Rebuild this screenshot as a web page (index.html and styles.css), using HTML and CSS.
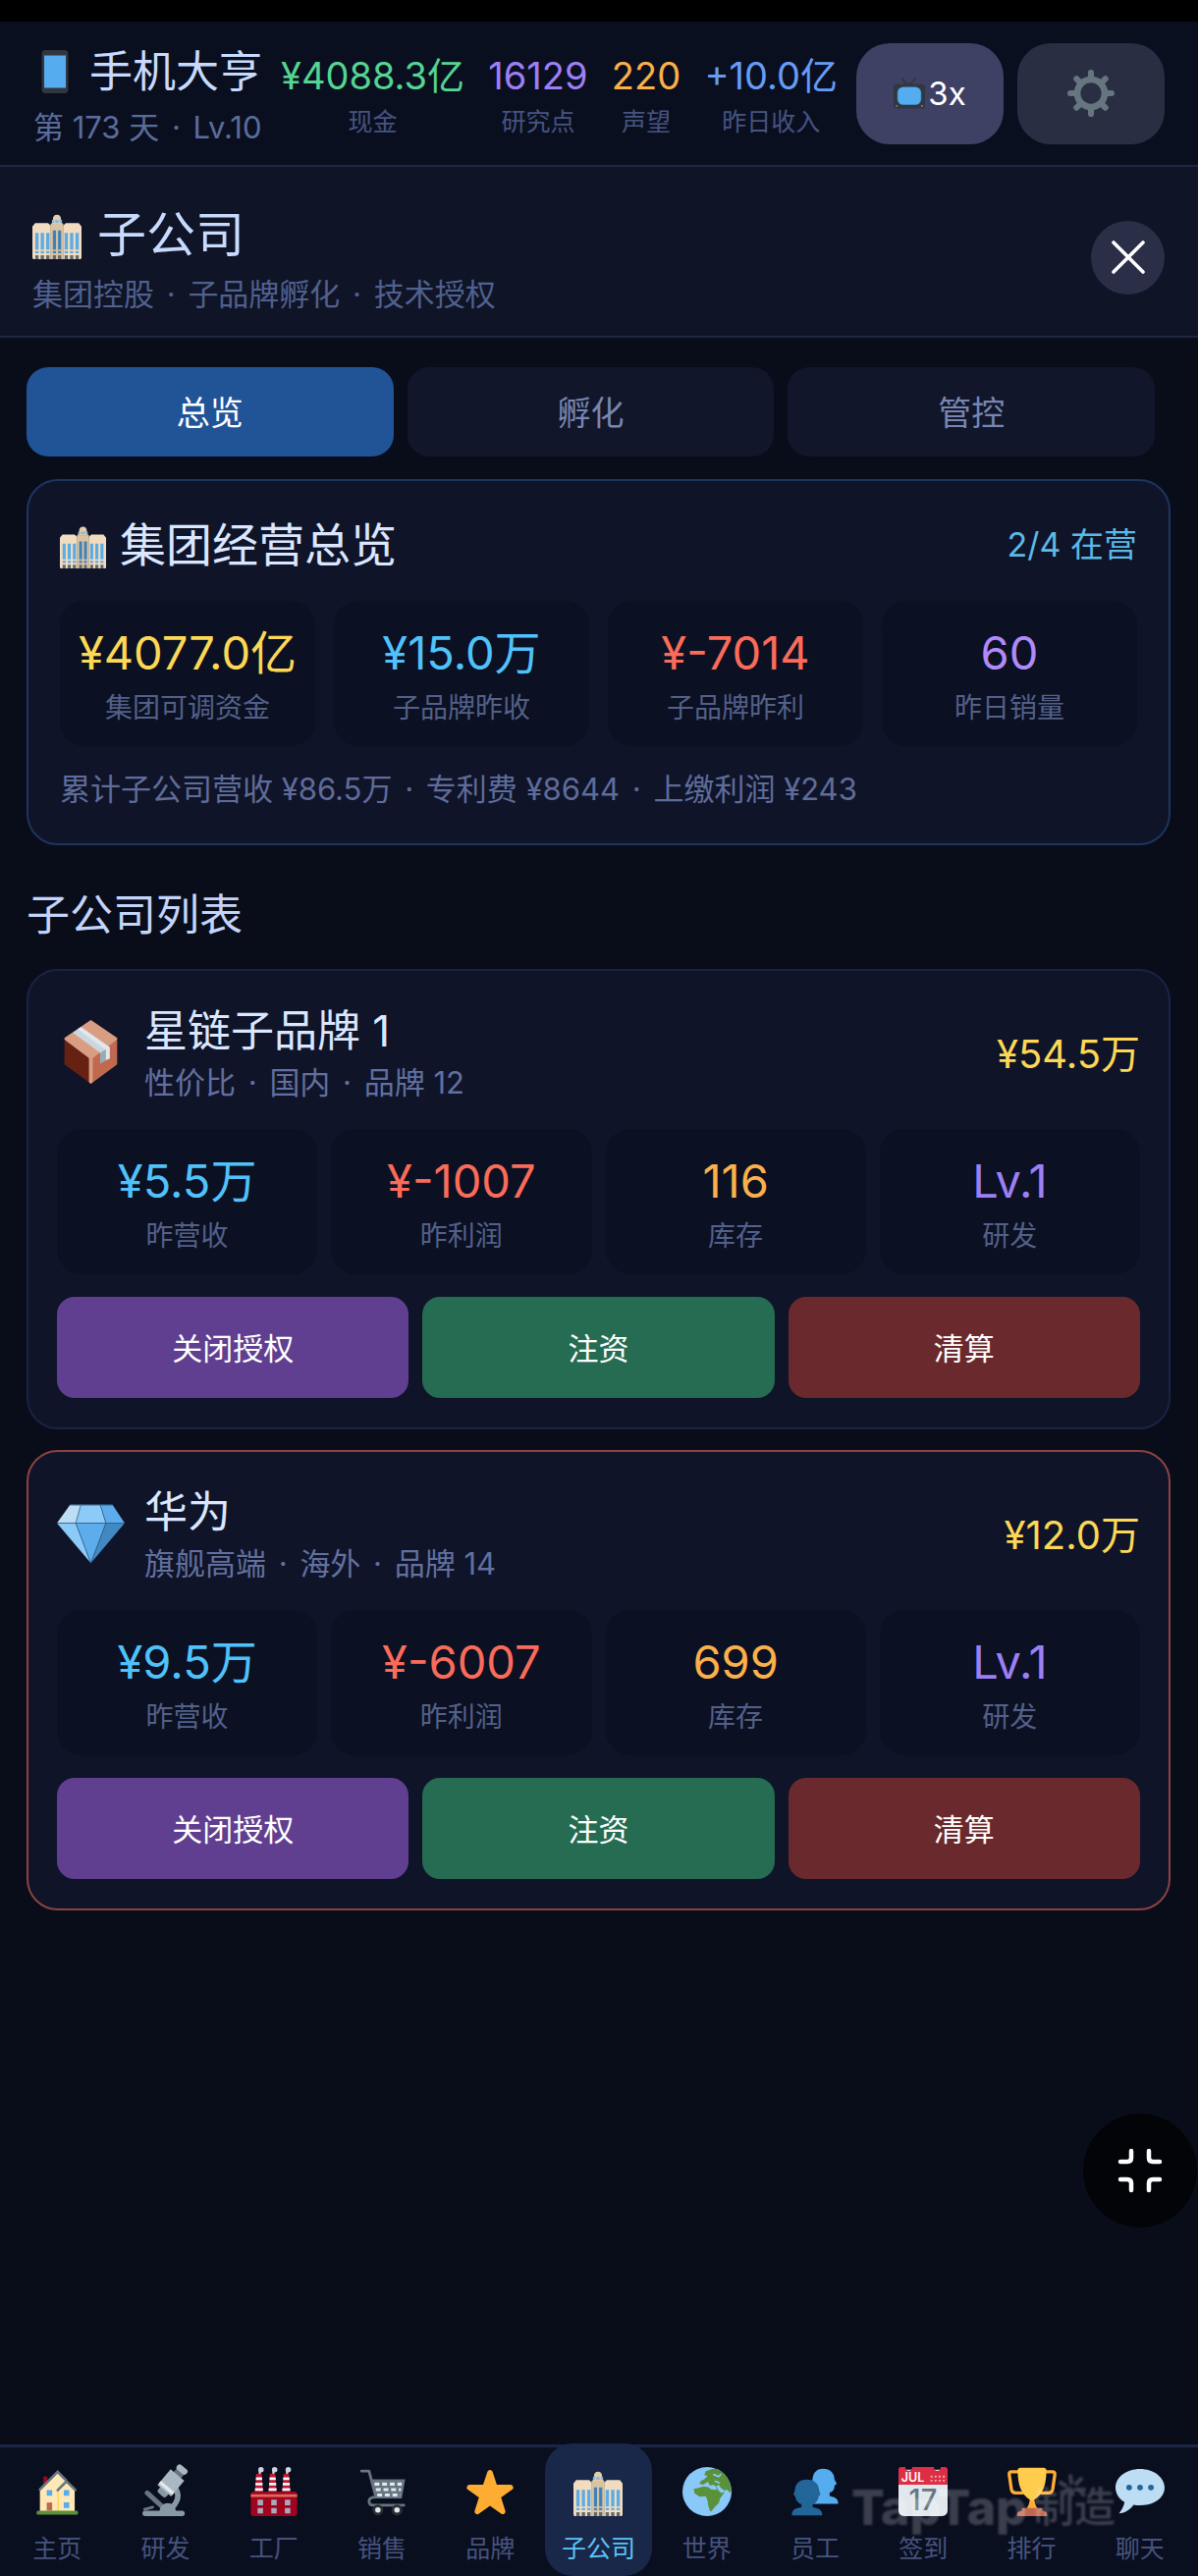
FILE: index.html
```html
<!DOCTYPE html>
<html lang="zh-CN">
<head>
	<meta charset="utf-8">
	<meta name="viewport" content="width=device-width, initial-scale=1">
	<title>手机大亨</title>
	<link rel="stylesheet" href="styles.css">
</head>
<body>
	<!-- shared icon, used in three places -->
	<svg class="defs" aria-hidden="true">
		<symbol id="building" viewBox="0 0 36 36">
			<path fill="#f1dcc1" d="M0 12l2-2.500h9.500l2 2V36H1a1 1 0 0 1-1-1zM36 12l-2-2.500h-9.500l-2 2V36H35a1 1 0 0 0 1-1z"/>
			<path fill="#d9c3a3" d="M13.300 10h9.400v26h-9.400z"/>
			<path fill="#e3cda9" d="M15 7q0-3.500 3-3.500T21 7l1 3h-8z"/>
			<path fill="#88b9dc" d="M14.300 7.200h7.400v2.100h-7.400z"/>
			<path fill="#e3cda9" d="M16 7h.7v3H16zM19.300 7h.7v3h-.7z"/>
			<path fill="#5dabe3" d="M2.100 16.700h2.400V29H2.100zM6.100 16.700h2.400V29H6.100zM10.100 16.700h2.400V29h-2.400zM23.600 16.700H26V29h-2.400zM27.600 16.700H30V29h-2.400zM31.600 16.700H34V29h-2.400zM2.100 30h2.400v1.700H2.100zM6.100 30h2.400v1.700H6.100zM10.100 30h2.400v1.700h-2.400zM23.600 30H26v1.700h-2.400zM27.600 30H30v1.700h-2.400zM31.600 30H34v1.700h-2.400z"/>
			<path fill="#3f82b9" d="M15 15h2.300v14H15zM18.800 15h2.300v14h-2.300zM15 30h2.300v1.700H15zM18.800 30h2.300v1.700h-2.300z"/>
			<path fill="#66686b" d="M2.100 33.200h2.400V36H2.100zM6.100 33.200h2.400V36H6.100zM10.100 33.200h2.400V36h-2.400zM15 33.200h2.300V36H15zM18.800 33.200h2.300V36h-2.300zM23.600 33.200H26V36h-2.400zM27.600 33.200H30V36h-2.400zM31.600 33.200H34V36h-2.400z"/>
		</symbol>
	</svg>

	<div class="statusbar"></div>

	<header class="topbar">
		<div class="brand">
			<h1 class="brand-name">
				<svg class="icon-phone" viewBox="0 0 36 36"><rect x="7" width="22" height="36" rx="3" fill="#31373d"/><path fill="#55acee" d="M9 4.500h18v27H9z"/></svg>
				手机大亨
			</h1>
			<div class="brand-sub">第 173 天 <span class="dot">·</span> Lv.10</div>
		</div>
		<div class="resources">
			<div class="resource"><div class="resource-value green">¥4088.3亿</div><div class="resource-label">现金</div></div>
			<div class="resource"><div class="resource-value purple">16129</div><div class="resource-label">研究点</div></div>
			<div class="resource"><div class="resource-value orange">220</div><div class="resource-label">声望</div></div>
			<div class="resource"><div class="resource-value blue">+10.0亿</div><div class="resource-label">昨日收入</div></div>
		</div>
		<div class="tools">
			<button class="tool speed" type="button">
				<svg class="icon-tv" viewBox="0 0 36 36">
					<path d="M10 1l7 8 8-8" fill="none" stroke="#31373d" stroke-width="2.200" stroke-linecap="round"/>
					<rect y="7" width="36" height="28" rx="4" fill="#31373d"/>
					<rect x="4" y="10" width="28" height="21" rx="7" fill="#2b6a9c"/>
					<rect x="4.800" y="10.500" width="26.400" height="20" rx="6" fill="#55acee"/>
					<circle cx="3.500" cy="32" r="1.300" fill="#66757f"/><circle cx="32.500" cy="32" r="1.300" fill="#66757f"/>
				</svg>3x
			</button>
			<button class="tool" type="button" aria-label="设置">
				<svg class="icon-gear" viewBox="0 0 36 36">
					<circle cx="18" cy="18" r="10.500" fill="none" stroke="#66757f" stroke-width="5"/>
					<path d="M18 6V2.300M18 30v3.700M6 18H2.300M30 18h3.700M9.500 9.500L7 7M26.500 9.500L29 7M9.500 26.500L7 29M26.500 26.500L29 29" stroke="#66757f" stroke-width="4.600" stroke-linecap="round"/>
				</svg>
			</button>
		</div>
	</header>

	<section class="pagehead">
		<div>
			<h2 class="pagehead-title"><svg class="icon-title"><use href="#building"/></svg>子公司</h2>
			<p class="pagehead-sub">集团控股 <span class="dot">·</span> 子品牌孵化 <span class="dot">·</span> 技术授权</p>
		</div>
		<button class="close" type="button" aria-label="关闭">
			<svg viewBox="0 0 36 36"><path d="M3 3l30 30M33 3L3 33" stroke="#fff" stroke-width="3.600" stroke-linecap="round"/></svg>
		</button>
	</section>

	<main class="content">
		<div class="tabs">
			<button class="tab active" type="button">总览</button>
			<button class="tab" type="button">孵化</button>
			<button class="tab" type="button">管控</button>
		</div>

		<section class="card overview">
			<div class="overview-head">
				<h3 class="overview-title"><svg class="icon-overview"><use href="#building"/></svg>集团经营总览</h3>
				<span class="overview-count">2/4 在营</span>
			</div>
			<div class="stats">
				<div class="stat"><div class="stat-value gold">¥4077.0亿</div><div class="stat-label">集团可调资金</div></div>
				<div class="stat"><div class="stat-value sky">¥15.0万</div><div class="stat-label">子品牌昨收</div></div>
				<div class="stat"><div class="stat-value red">¥-7014</div><div class="stat-label">子品牌昨利</div></div>
				<div class="stat"><div class="stat-value violet">60</div><div class="stat-label">昨日销量</div></div>
			</div>
			<p class="overview-note">累计子公司营收 ¥86.5万 <span class="dot">·</span> 专利费 ¥8644 <span class="dot">·</span> 上缴利润 ¥243</p>
		</section>

		<h3 class="section-title">子公司列表</h3>

		<div class="list">
			<article class="card company">
				<div class="company-head">
					<svg class="company-icon" viewBox="0 0 36 36">
						<path fill="#662113" d="M4 11.500v13.200L18 35V21z"/>
						<path fill="#c1694f" d="M32 11.500v13.200L18 35V21z"/>
						<path fill="#d99e82" d="M18 1l14 9.500v1L18 22 4 11.500v-1z"/>
						<path fill="#d99e82" d="M17 20.500h2V34l-1 1-1-1z"/>
						<path fill="#ccd6dd" d="M8.500 7.800L12.800 4.800 28 15.500v6L23 23.500v-5z"/>
						<path fill="#e1e8ed" d="M11 5.900l1.800-1.100L28 15.500v6l-2 .8v-5.400z"/>
						<path fill="#99aab5" d="M23 18.500l3-2v6l-3 1.700z"/>
					</svg>
					<div class="company-info">
						<h4 class="company-name">星链子品牌 1</h4>
						<p class="company-sub">性价比 <span class="dot">·</span> 国内 <span class="dot">·</span> 品牌 12</p>
					</div>
					<span class="company-cash">¥54.5万</span>
				</div>
				<div class="stats">
					<div class="stat"><div class="stat-value sky">¥5.5万</div><div class="stat-label">昨营收</div></div>
					<div class="stat"><div class="stat-value red">¥-1007</div><div class="stat-label">昨利润</div></div>
					<div class="stat"><div class="stat-value orange">116</div><div class="stat-label">库存</div></div>
					<div class="stat"><div class="stat-value purple">Lv.1</div><div class="stat-label">研发</div></div>
				</div>
				<div class="actions">
					<button class="action license" type="button">关闭授权</button>
					<button class="action invest" type="button">注资</button>
					<button class="action liquidate" type="button">清算</button>
				</div>
			</article>

			<article class="card company warning">
				<div class="company-head">
					<svg class="company-icon" viewBox="0 0 36 36">
						<path fill="#bdddf4" d="M7 3h6l-2.500 9.800H0z"/>
						<path fill="#8ccaf7" d="M12.700 3H23l3 9.800H10z"/>
						<path fill="#5dadec" d="M23 3h6.500L36 12.800H26z"/>
						<path fill="#8ccaf7" d="M0 12.800h10L18 34z"/>
						<path fill="#5dadec" d="M10 12.800h16L18 34z"/>
						<path fill="#4289c1" d="M26 12.800h10L18 34z"/>
						<path fill="none" stroke="#2a5c88" stroke-width=".4" d="M7 3.200h22.500M0 12.800h36M12.700 3L10 12.800 18 34l8-21.200L23 3"/>
					</svg>
					<div class="company-info">
						<h4 class="company-name">华为</h4>
						<p class="company-sub">旗舰高端 <span class="dot">·</span> 海外 <span class="dot">·</span> 品牌 14</p>
					</div>
					<span class="company-cash">¥12.0万</span>
				</div>
				<div class="stats">
					<div class="stat"><div class="stat-value sky">¥9.5万</div><div class="stat-label">昨营收</div></div>
					<div class="stat"><div class="stat-value red">¥-6007</div><div class="stat-label">昨利润</div></div>
					<div class="stat"><div class="stat-value orange">699</div><div class="stat-label">库存</div></div>
					<div class="stat"><div class="stat-value purple">Lv.1</div><div class="stat-label">研发</div></div>
				</div>
				<div class="actions">
					<button class="action license" type="button">关闭授权</button>
					<button class="action invest" type="button">注资</button>
					<button class="action liquidate" type="button">清算</button>
				</div>
			</article>
		</div>
	</main>

	<nav class="bottomnav">
		<a class="navitem" href="#">
			<svg viewBox="0 0 36 36">
				<path fill="#a0041e" d="M8 7h3v7H8z"/>
				<path fill="#ffe8b6" d="M5.500 16L18.500 4 31 16v17H5.500z"/>
				<path fill="#ffcc4d" d="M18.500 17h.8v15h-.8z"/>
				<path d="M5.500 16.500l13-13 6 6M18.500 17l6.500-6.500 6.500 6.300" fill="none" stroke="#66757f" stroke-width="1.900" stroke-linecap="round"/>
				<path fill="#55acee" d="M10.500 17h4v4h-4zM23 17h4v4h-4zM23 26h4v4h-4z"/>
				<path fill="#c1694f" d="M10.500 26h4v6h-4z"/>
				<rect x="3" y="32" width="30.500" height="3" rx="1.200" fill="#5c913b"/>
			</svg>
			<span>主页</span>
		</a>
		<a class="navitem" href="#">
			<svg viewBox="0 0 36 36">
				<path d="M5 19l12 11" stroke="#66757f" stroke-width="3.600" stroke-linecap="round"/>
				<path d="M26 16q4 7-3 14" fill="none" stroke="#8899a6" stroke-width="4"/>
				<path fill="#8899a6" d="M14 32q1-5.500 6-5.500t6 5.500h4.500a1.700 1.700 0 0 1 0 4h-27a1.700 1.700 0 0 1 0-4z"/>
				<path d="M3 31l6-1.500" stroke="#66757f" stroke-width="2" stroke-linecap="round"/>
				<g transform="rotate(40 22 12)">
					<rect x="18.500" y="-1" width="7" height="6" fill="#66757f"/>
					<rect x="17.500" y="-3.500" width="9" height="4.500" rx="2" fill="#aab8c2"/>
					<rect x="18" y="15" width="8" height="8" rx="2" fill="#8899a6"/>
					<path fill="#aab8c2" d="M15.500 4h13v15h-13z"/>
					<path fill="#e1e8ed" d="M15.500 15h13v2.600h-13z"/>
				</g>
			</svg>
			<span>研发</span>
		</a>
		<a class="navitem" href="#">
			<svg viewBox="0 0 36 36">
				<path fill="#ccd6dd" d="M6.500 2q0-2 2-2t2 2-2 2l-.5 2h-1zM16.500 2q0-2 2-2t2 2-2 2l-.5 2h-1zM26.500 2q0-2 2-2t2 2-2 2l-.5 2h-1z"/>
				<path fill="#be1931" d="M5 5h4l1 14H4zM15 5h4l1 14h-6zM25 5h4l1 14h-6z"/>
				<path fill="#f5f8fa" d="M4.800 7.500h4.500v2H4.700zM4.500 11.500h5.100v2H4.400zM4.200 15.500h5.700v2H4zM14.800 7.500h4.500v2h-4.600zM14.500 11.500h5.100v2h-5.200zM14.200 15.500h5.700v2H14zM24.800 7.500h4.500v2h-4.600zM24.500 11.500h5.100v2h-5.200zM24.200 15.500h5.700v2H24z"/>
				<rect x="1" y="18" width="34" height="18" rx="2" fill="#a0041e"/>
				<rect x="1" y="20" width="34" height="2" fill="#dd6b5b"/>
				<path fill="#a7a9bd" d="M6 24h4v4H6zM16 24h4v4h-4zM26 24h4v4h-4zM6 30h4v4H6zM16 30h4v4h-4zM26 30h4v4h-4z"/>
			</svg>
			<span>工厂</span>
		</a>
		<a class="navitem" href="#">
			<svg viewBox="0 0 36 36">
				<path d="M3 3h5.500l5 19q-5 0-5 3t3 3H34" fill="none" stroke="#66757f" stroke-width="2" stroke-linecap="round" stroke-linejoin="round"/>
				<path fill="#66757f" d="M10 9h25l-2.500 14H13.500z"/>
				<path d="M12.500 12.500h20M13.500 16.500h18.500M14.500 20.500h17" stroke="#e1e8ed" stroke-width="2.200" stroke-dasharray="3.600 2"/>
				<circle cx="15" cy="31.500" r="4" fill="#292f33"/><circle cx="15" cy="31.500" r="2" fill="#e1e8ed"/>
				<circle cx="29" cy="31.500" r="4" fill="#292f33"/><circle cx="29" cy="31.500" r="2" fill="#e1e8ed"/>
			</svg>
			<span>销售</span>
		</a>
		<a class="navitem" href="#">
			<svg viewBox="0 0 36 36"><path fill="#ffac33" d="M27.287 34.627c-.404 0-.806-.124-1.152-.371L18 28.422l-8.135 5.834a1.970 1.970 0 0 1-2.312-.008 1.971 1.971 0 0 1-.721-2.194l3.034-9.792-8.062-5.681a1.980 1.980 0 0 1-.708-2.203 1.978 1.978 0 0 1 1.866-1.363L12.947 13l3.179-9.549a1.976 1.976 0 0 1 3.749 0L23 13l10.036.015a1.975 1.975 0 0 1 1.159 3.566l-8.062 5.681 3.034 9.792a1.970 1.970 0 0 1-.720 2.194 1.957 1.957 0 0 1-1.160.379z"/></svg>
			<span>品牌</span>
		</a>
		<a class="navitem active" href="#" aria-current="page">
			<svg><use href="#building"/></svg>
			<span>子公司</span>
		</a>
		<a class="navitem" href="#">
			<svg viewBox="0 0 36 36">
				<circle cx="18" cy="18" r="18" fill="#88c9f9"/>
				<path fill="#5c913b" d="M16 6l1-3 5-1.500 4-.1Q34 5.500 35.800 16l-.6 3-2.500-2.500-2 .8-2.500-2-1.700-2.300-1.500.8 1 3 2.500 2.200 2.500-.8-3.500 5-.8 3-3 3.200-2 2.500q-1 1.500-1.800-.3l-1-3.500-.6-3.800-1.200-2.800-4.500.2-3.800-2.400-.5-3.300L11 15.500l4.500-1.300 3.500.6 2 1.600 4 .4-.3-2.600-2.200-1.200-2.200.6-1.800-2.800-3.200 2.200-2.800-.6.8-2.200 2.700-1.200L18.500 6.500z"/>
				<path d="M23 5.500l3.500 1.500 1.500-1.500M24 10.500l3 1" fill="none" stroke="#88c9f9" stroke-width="1.200" stroke-linecap="round"/>
			</svg>
			<span>世界</span>
		</a>
		<a class="navitem" href="#">
			<svg viewBox="0 0 36 36">
				<path fill="#55acee" d="M24 1.200c5 0 8.300 3.300 8.300 8l1.700 3.300q-1.200.6-1.600 1-.3 4.500-3.700 5.300v2.500c3.800.8 6.300 1.800 6.300 5.700H14l2-16q0-9.800 8-9.800z"/>
				<path fill="#226699" d="M12 9.200c5.500 0 9 3.500 9 8l1 2.800-1.200 1.400q-.8 4.500-4.500 6v2.200c4.600.8 7 1.900 7 5.900H1c0-4 2-5.300 7-6v-2.100q-3.800-1.500-4.600-6L2.200 20 3.300 17c0-4.500 3.200-7.800 8.700-7.800z"/>
			</svg>
			<span>员工</span>
		</a>
		<a class="navitem" href="#">
			<svg viewBox="0 0 36 36">
				<rect y="2" width="36" height="34" rx="4" fill="#e1e8ed"/>
				<path fill="#dd2e44" d="M0 13V2q0-2 2-2h3q0 2.800 2.500 2.800T10 0h16q0 2.800 2.500 2.800T31 0h3q2 0 2 2v11z"/>
				<path d="M23.500 7h11M23.500 10h11" stroke="#f4abba" stroke-width="1.400" stroke-dasharray="1.400 1.600"/>
				<text x="2" y="11" class="cal-month">JUL</text>
				<text x="18" y="32" class="cal-day" text-anchor="middle">17</text>
			</svg>
			<span>签到</span>
		</a>
		<a class="navitem" href="#">
			<svg viewBox="0 0 36 36">
				<path d="M9 3.500H3q-2 0-1.700 2l1.500 10.500q.5 3 3.200 3h6M27 3.500h6q2 0 1.700 2L33.200 16q-.5 3-3.200 3h-6" fill="none" stroke="#ffac33" stroke-width="2.400"/>
				<path fill="#ffac33" d="M16.500 22h3q0 6 3.500 9.500H13q3.500-3.500 3.500-9.500z"/>
				<path fill="#ffcc4d" d="M7.500 2.500Q7.500.500 9.500.500h17q2 0 2 2C28.500 14 25.500 21 18 25 10.500 21 7.500 14 7.500 2.500z"/>
				<path fill="#c1694f" d="M10.500 31q0-1 1-1h13q1 0 1 1v1q3.500.5 3.500 2.500V36H7v-1.500q0-2 3.500-2.500z"/>
			</svg>
			<span>排行</span>
		</a>
		<a class="navitem" href="#">
			<svg viewBox="0 0 36 36">
				<path fill="#bdddf4" d="M18 1.500c-10 0-18 6-18 13.700 0 4.300 2.500 8.100 6.600 10.600-.3 2.500-1.600 5-4 8.200 4 0 8.500-3 10.600-6.300 1.500.3 3 .4 4.800.4 10 0 18-5.400 18-12.900S28 1.500 18 1.500z"/>
				<circle cx="10" cy="15" r="2.100" fill="#226699"/><circle cx="18" cy="15" r="2.100" fill="#226699"/><circle cx="26" cy="15" r="2.100" fill="#226699"/>
			</svg>
			<span>聊天</span>
		</a>
		<div class="watermark" aria-hidden="true">
			<span class="watermark-latin">TapTap</span>
			<span>制造</span>
			<svg viewBox="0 0 28 24"><path d="M13 9l-1-7M7 12L2 9M9 16l-5 5M18 10l5-5M18 16h8M14 17v4" stroke="#fff" stroke-width="4" stroke-linecap="round"/></svg>
		</div>
	</nav>

	<button class="fab" type="button" aria-label="退出全屏">
		<svg viewBox="0 0 44 44"><path d="M13 2v7q0 4-4 4H2M31 2v7q0 4 4 4h7M13 42v-7q0-4-4-4H2M31 42v-7q0-4 4-4h7" fill="none" stroke="#fff" stroke-width="4.500" stroke-linecap="round"/></svg>
	</button>
</body>
</html>
```
FILE: styles.css
```css
* {
	box-sizing: border-box;
}

body {
	margin: 0;
	min-height: 100vh;
	display: flex;
	flex-direction: column;
	position: relative;
	background-color: #090d1a;
	color: #d6e2ff;
	font-family: Inter, "Noto Sans CJK SC", sans-serif;
	font-weight: 400;
	font-size: 31px;
	overflow-x: hidden;
}

h1, h2, h3, h4, p {
	margin: 0;
	font-weight: inherit;
}

button {
	border: 0;
	padding: 0;
	font: inherit;
	color: #fff;
	cursor: pointer;
}

a {
	text-decoration: none;
}

svg {
	display: block;
	flex: none;
	overflow: visible;
}

.defs {
	position: absolute;
	width: 0;
	height: 0;
}

.dot {
	margin: 0 4px;
}

.green { color: #55d492; }
.purple { color: #9d7ff5; }
.violet { color: #b18af8; }
.orange { color: #fbb04a; }
.blue { color: #669cf5; }
.gold { color: #fcd855; }
.sky { color: #4fc2fb; }
.red { color: #fb6b5a; }

/* top bar */

.statusbar {
	height: 22px;
	background-color: #000;
}

.topbar {
	display: flex;
	align-items: center;
	height: 148px;
	padding: 0 34px;
	background-color: #0a0f20;
	border-bottom: 2px solid #1d2645;
}

.brand {
	padding-top: 3px;
	white-space: nowrap;
}

.brand-name {
	display: flex;
	align-items: center;
	gap: 13px;
	font-size: 44px;
	line-height: 66px;
	color: #c8dbff;
}

.icon-phone {
	width: 44px;
	height: 44px;
}

.brand-sub {
	line-height: 48px;
	color: #5b6c9c;
}

.resources {
	flex: 1;
	display: flex;
	justify-content: space-between;
	margin: 0 19px;
	text-align: center;
	white-space: nowrap;
}

.resource-value {
	font-size: 38px;
	line-height: 58px;
}

.resource-label {
	font-size: 25px;
	line-height: 36px;
	color: #465480;
}

.tools {
	display: flex;
	gap: 14px;
}

.tool {
	display: flex;
	align-items: center;
	justify-content: center;
	gap: 3px;
	width: 150px;
	height: 103px;
	border-radius: 34px;
	background-color: #2a2e43;
	font-size: 33px;
}

.speed {
	background-color: #3e4064;
}

.icon-tv {
	width: 32px;
	height: 33px;
}

.icon-gear {
	width: 48px;
	height: 48px;
}

/* page head */

.pagehead {
	display: flex;
	align-items: center;
	justify-content: space-between;
	padding: 31px 34px 19px 33px;
	background-color: #0f1426;
	border-bottom: 2px solid #1d2645;
}

.pagehead-title {
	display: flex;
	align-items: center;
	gap: 16px;
	font-size: 50px;
	line-height: 76px;
	color: #c8dbff;
}

.icon-title {
	width: 50px;
	height: 50px;
}

.pagehead-sub {
	line-height: 46px;
	color: #50608f;
}

.close {
	display: flex;
	align-items: center;
	justify-content: center;
	width: 75px;
	height: 75px;
	border-radius: 50%;
	background-color: #2b2e47;
}

.close svg {
	width: 36px;
	height: 36px;
}

/* content */

.content {
	flex: 1;
	padding: 30px 28px 30px 27px;
}

.tabs {
	display: flex;
	gap: 14px;
	padding-right: 16px;
	margin-bottom: 23px;
}

.tab {
	flex: 1;
	height: 91px;
	padding-bottom: 3px;
	border-radius: 22px;
	background-color: #11162a;
	color: #7786b0;
	font-size: 34px;
}

.tab.active {
	background-color: #215397;
	color: #fff;
}

.card {
	border: 2px solid #1a2442;
	border-radius: 32px;
	background-color: #0f1429;
}

.overview {
	padding: 34px 32px 33px;
	border-color: #1e355f;
}

.overview-head {
	display: flex;
	align-items: center;
	justify-content: space-between;
	margin-bottom: 26px;
	line-height: 62px;
}

.overview-title {
	display: flex;
	align-items: center;
	gap: 14px;
	font-size: 47px;
	color: #dbe7ff;
}

.icon-overview {
	width: 47px;
	height: 47px;
}

.overview-count {
	font-size: 34px;
	color: #5ab9e6;
}

.stats {
	display: grid;
	grid-template-columns: repeat(4, 1fr);
	gap: 14px;
}

.overview .stats {
	gap: 19px;
}

.stat {
	height: 148px;
	padding-top: 20px;
	border-radius: 25px;
	background-color: #0b1022;
	text-align: center;
	white-space: nowrap;
}

.stat-value {
	font-size: 47px;
	line-height: 66px;
}

.stat-label {
	font-size: 28px;
	line-height: 46px;
	color: #536089;
}

.overview-note {
	margin-top: 22px;
	line-height: 44px;
	color: #5f6c9a;
}

.section-title {
	margin: 41px 0 25px;
	font-size: 44px;
	line-height: 60px;
	color: #c4d4fa;
}

.list {
	display: flex;
	flex-direction: column;
	gap: 21px;
}

.company {
	padding: 29px 29px 30px;
}

.company.warning {
	border-color: #8c4340;
}

.company-head {
	display: flex;
	align-items: center;
	margin-bottom: 26px;
}

.company-icon {
	width: 69px;
	height: 69px;
	margin-right: 20px;
}

.company-info {
	flex: 1;
}

.company-name {
	font-size: 44px;
	line-height: 64px;
	color: #dbe7ff;
}

.company-sub {
	line-height: 42px;
	color: #62709f;
}

.company-cash {
	font-size: 40px;
	color: #fcd855;
}

.actions {
	display: flex;
	gap: 14px;
	margin-top: 23px;
}

.action {
	flex: 1;
	height: 103px;
	padding-bottom: 3px;
	border-radius: 18px;
}

.license { background-color: #603f90; }
.invest { background-color: #256c52; }
.liquidate { background-color: #6a2a2d; }

/* bottom nav */

.bottomnav {
	display: flex;
	position: relative;
	height: 134px;
	padding: 0 4px 0 3px;
	background-color: #0a0f20;
	border-top: 3px solid #1c2547;
}

.navitem {
	flex: 1;
	display: flex;
	flex-direction: column;
	align-items: center;
	gap: 15px;
	margin: -4px 1px 0;
	padding-top: 24px;
	border-radius: 28px;
	color: #46537e;
	font-size: 25px;
	line-height: 36px;
}

.navitem.active {
	background-color: #192748;
	color: #5cc3f8;
}

.navitem > svg {
	width: 50px;
	height: 50px;
}

.cal-month {
	font-size: 9px;
	font-weight: 600;
	fill: #fff;
}

.cal-day {
	font-size: 21px;
	font-weight: 500;
	fill: #66757f;
}

.watermark {
	position: absolute;
	right: 84px;
	bottom: 40px;
	display: flex;
	align-items: center;
	gap: 6px;
	color: #fff;
	font-size: 42px;
	font-weight: 500;
	line-height: 60px;
	opacity: .2;
	filter: blur(1px);
	pointer-events: none;
}

.watermark-latin {
	font-size: 50px;
	font-weight: 800;
}

.watermark svg {
	position: absolute;
	right: 30px;
	top: -4px;
	width: 28px;
	height: 24px;
}

/* floating button */

.fab {
	position: absolute;
	right: 1px;
	bottom: 355px;
	display: flex;
	align-items: center;
	justify-content: center;
	width: 116px;
	height: 116px;
	border-radius: 50%;
	background-color: #030408;
}

.fab svg {
	width: 44px;
	height: 44px;
}
```
